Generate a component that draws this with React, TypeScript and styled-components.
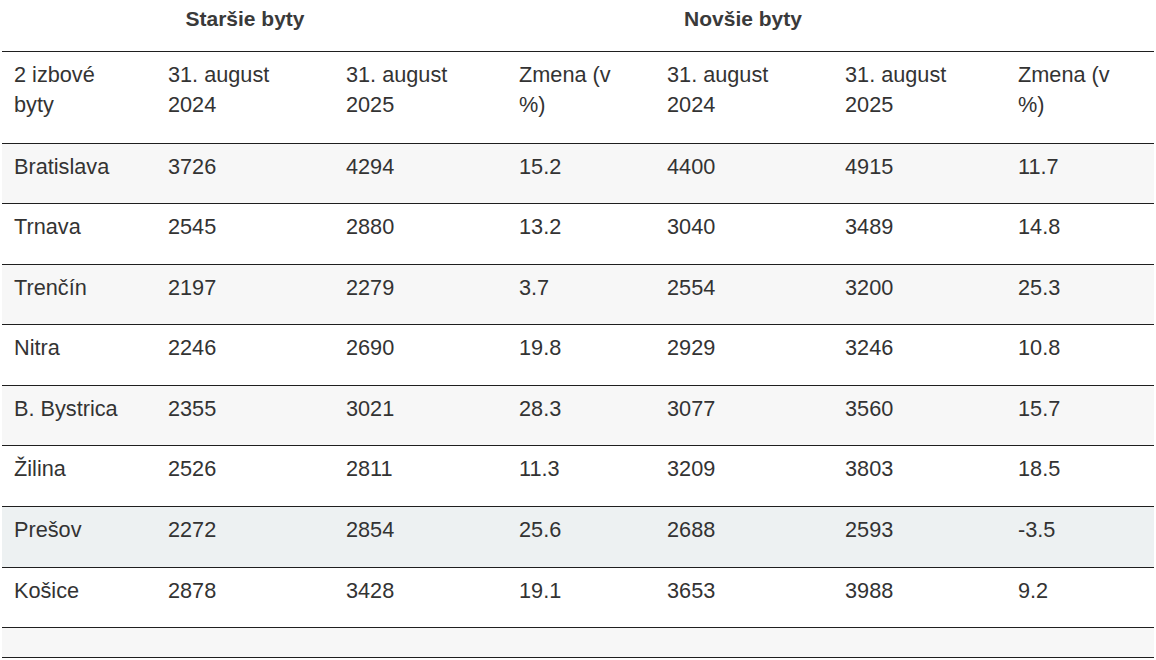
import React from "react";
import styled, { createGlobalStyle } from "styled-components";

const GlobalStyle = createGlobalStyle`
  html, body {
    margin: 0;
    padding: 0;
    background: #ffffff;
  }
  body {
    font-family: "Liberation Sans", Arial, sans-serif;
    color: #333333;
  }
`;

interface Row {
  city: string;
  values: string[];
  highlight?: boolean;
}

const rows: Row[] = [
  { city: "Bratislava", values: ["3726", "4294", "15.2", "4400", "4915", "11.7"] },
  { city: "Trnava", values: ["2545", "2880", "13.2", "3040", "3489", "14.8"] },
  { city: "Trenčín", values: ["2197", "2279", "3.7", "2554", "3200", "25.3"] },
  { city: "Nitra", values: ["2246", "2690", "19.8", "2929", "3246", "10.8"] },
  { city: "B. Bystrica", values: ["2355", "3021", "28.3", "3077", "3560", "15.7"] },
  { city: "Žilina", values: ["2526", "2811", "11.3", "3209", "3803", "18.5"] },
  { city: "Prešov", values: ["2272", "2854", "25.6", "2688", "2593", "-3.5"], highlight: true },
  { city: "Košice", values: ["2878", "3428", "19.1", "3653", "3988", "9.2"] },
];

const columnWidths = [154, 178, 173, 148, 178, 173, 148];

const headLabels = [
  "2 izbové byty",
  "31. august 2024",
  "31. august 2025",
  "Zmena (v %)",
  "31. august 2024",
  "31. august 2025",
  "Zmena (v %)",
];

const App = () => {
  return (
    <>
      <GlobalStyle />
      <Wrap>
        <Table>
          <colgroup>
            {columnWidths.map((w, i) => (
              <col key={i} style={{ width: w }} />
            ))}
          </colgroup>
          <thead>
            <TitleRow>
              <GroupTitle colSpan={3} $shift={19}>
                Staršie byty
              </GroupTitle>
              <GroupTitle colSpan={3} $shift={27}>
                Novšie byty
              </GroupTitle>
              <GroupTitle />
            </TitleRow>
            <HeadRow>
              {headLabels.map((label, i) => (
                <HeadCell key={i} $narrow={i === 0}>
                  {label}
                </HeadCell>
              ))}
            </HeadRow>
          </thead>
          <tbody>
            {rows.map((row, i) => (
              <BodyRow key={row.city} $striped={i % 2 === 0} $highlight={row.highlight}>
                <Cell>{row.city}</Cell>
                {row.values.map((v, j) => (
                  <Cell key={j}>{v}</Cell>
                ))}
              </BodyRow>
            ))}
            <BodyRow $striped>
              <EmptyCell colSpan={7} />
            </BodyRow>
          </tbody>
        </Table>
      </Wrap>
    </>
  );
};

const Wrap = styled.div`
  padding: 0 2px;
  width: 1152px;
`;

const Table = styled.table`
  width: 1152px;
  border-collapse: collapse;
  table-layout: fixed;
  font-size: 21.7px;
  line-height: 30px;
`;

const TitleRow = styled.tr`
  height: 51px;
`;

const GroupTitle = styled.th<{ $shift?: number }>`
  font-size: 21px;
  font-weight: 700;
  color: #3a3a3a;
  text-align: center;
  vertical-align: top;
  padding: 4px ${({ $shift }) => $shift ?? 0}px 0 0;
`;

const HeadRow = styled.tr`
  border-top: 1px solid #1f1f1f;
  border-bottom: 1px solid #1f1f1f;
`;

const HeadCell = styled.th<{ $narrow?: boolean }>`
  font-weight: 400;
  text-align: left;
  vertical-align: top;
  padding: 8px ${({ $narrow }) => ($narrow ? 40 : 12)}px 23px 12px;
`;

const BodyRow = styled.tr<{ $striped?: boolean; $highlight?: boolean }>`
  border-bottom: 1px solid #1f1f1f;
  background: ${({ $striped, $highlight }) =>
    $highlight ? "#edf1f2" : $striped ? "#f7f7f7" : "#ffffff"};
`;

const Cell = styled.td`
  vertical-align: top;
  padding: 8px 12px 21.6px;
`;

const EmptyCell = styled.td`
  height: 29px;
  padding: 0;
`;

export default App;
